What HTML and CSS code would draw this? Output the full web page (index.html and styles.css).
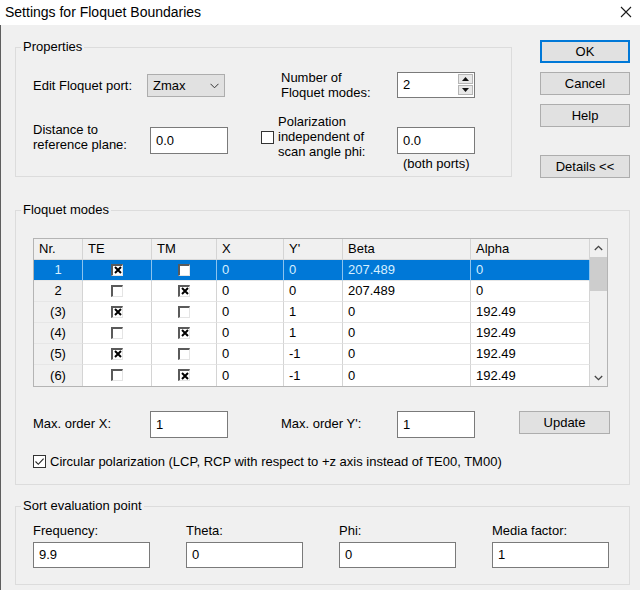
FILE: index.html
```html
<!doctype html>
<html lang="en">
<head>
	<meta charset="UTF-8">
	<title>Settings for Floquet Boundaries</title>
	<link rel="stylesheet" href="styles.css">
</head>
<body>
	<div class="titlebar">
		<span class="title">Settings for Floquet Boundaries</span>
		<svg class="close" width="12" height="12" viewBox="0 0 12 12"><path d="M1 1L11 11M11 1L1 11" stroke="#1a1a1a" stroke-width="1.1" fill="none"/></svg>
	</div>
	<div class="dialog">
		<div class="top">
			<fieldset class="group props">
				<legend>Properties</legend>
				<div class="gbody">
					<div class="prow prow1">
						<span class="lbl w114">Edit Floquet port:</span>
						<div class="select">Zmax<svg class="chev" width="9" height="6" viewBox="0 0 9 6"><path d="M0.5 0.8L4.5 4.8L8.5 0.8" stroke="#333" fill="none"/></svg></div>
						<span class="lbl modes">Number of<br>Floquet modes:</span>
						<div class="edit spin">2
							<div class="spin-btns">
								<span class="sb"><svg width="7" height="4" viewBox="0 0 7 4"><path d="M0 4L3.5 0L7 4Z" fill="#111"/></svg></span>
								<span class="sb"><svg width="7" height="4" viewBox="0 0 7 4"><path d="M0 0L3.5 4L7 0Z" fill="#111"/></svg></span>
							</div>
						</div>
					</div>
					<div class="prow prow2">
						<span class="lbl dist">Distance to<br>reference plane:</span>
						<div class="edit e78 dist-in">0.0</div>
						<span class="chk pol-chk"></span>
						<span class="lbl pol">Polarization<br>independent of<br>scan angle phi:</span>
						<div class="stack">
							<div class="edit e78">0.0</div>
							<div class="caption">(both ports)</div>
						</div>
					</div>
				</div>
			</fieldset>
			<div class="buttons">
				<div class="btn default">OK</div>
				<div class="btn">Cancel</div>
				<div class="btn">Help</div>
				<div class="btn details">Details &lt;&lt;</div>
			</div>
		</div>

		<fieldset class="group modesbox">
			<legend>Floquet modes</legend>
			<div class="gbody">
				<div class="grid">
					<table>
						<colgroup>
							<col style="width:49px"><col style="width:69px"><col style="width:65px"><col style="width:67px"><col style="width:59px"><col style="width:128px"><col style="width:119px">
						</colgroup>
						<tr class="head"><td>Nr.</td><td>TE</td><td>TM</td><td>X</td><td>Y'</td><td>Beta</td><td>Alpha</td></tr>
						<tr class="sel"><td class="nr">1</td><td class="c"><span class="tcb"><svg width="8" height="8" viewBox="0 0 8 8"><path d="M1 1L7 7M7 1L1 7" stroke="#000" stroke-width="2"/></svg></span></td><td class="c"><span class="tcb"></span></td><td>0</td><td>0</td><td>207.489</td><td>0</td></tr>
						<tr><td class="nr">2</td><td class="c"><span class="tcb"></span></td><td class="c"><span class="tcb"><svg width="8" height="8" viewBox="0 0 8 8"><path d="M1 1L7 7M7 1L1 7" stroke="#000" stroke-width="2"/></svg></span></td><td>0</td><td>0</td><td>207.489</td><td>0</td></tr>
						<tr><td class="nr">(3)</td><td class="c"><span class="tcb"><svg width="8" height="8" viewBox="0 0 8 8"><path d="M1 1L7 7M7 1L1 7" stroke="#000" stroke-width="2"/></svg></span></td><td class="c"><span class="tcb"></span></td><td>0</td><td>1</td><td>0</td><td>192.49</td></tr>
						<tr><td class="nr">(4)</td><td class="c"><span class="tcb"></span></td><td class="c"><span class="tcb"><svg width="8" height="8" viewBox="0 0 8 8"><path d="M1 1L7 7M7 1L1 7" stroke="#000" stroke-width="2"/></svg></span></td><td>0</td><td>1</td><td>0</td><td>192.49</td></tr>
						<tr><td class="nr">(5)</td><td class="c"><span class="tcb"><svg width="8" height="8" viewBox="0 0 8 8"><path d="M1 1L7 7M7 1L1 7" stroke="#000" stroke-width="2"/></svg></span></td><td class="c"><span class="tcb"></span></td><td>0</td><td>-1</td><td>0</td><td>192.49</td></tr>
						<tr class="last"><td class="nr">(6)</td><td class="c"><span class="tcb"></span></td><td class="c"><span class="tcb"><svg width="8" height="8" viewBox="0 0 8 8"><path d="M1 1L7 7M7 1L1 7" stroke="#000" stroke-width="2"/></svg></span></td><td>0</td><td>-1</td><td>0</td><td>192.49</td></tr>
					</table>
					<div class="vscroll">
						<div class="arrow"><svg width="9" height="6" viewBox="0 0 9 6"><path d="M0.8 5L4.5 1.3L8.2 5" stroke="#444" stroke-width="1.3" fill="none"/></svg></div>
						<div class="thumb"></div>
						<div class="track"></div>
						<div class="arrow"><svg width="9" height="6" viewBox="0 0 9 6"><path d="M0.8 1L4.5 4.7L8.2 1" stroke="#444" stroke-width="1.3" fill="none"/></svg></div>
					</div>
				</div>
				<div class="orow">
					<span class="lbl olbl">Max. order X:</span>
					<div class="edit e78">1</div>
					<span class="lbl olbl2">Max. order Y':</span>
					<div class="edit e78">1</div>
					<div class="btn update">Update</div>
				</div>
				<div class="crow">
					<span class="chk"><svg width="11" height="11" viewBox="0 0 11 11"><path d="M1.5 5.5L4.3 8.3L9.6 2.6" stroke="#222" stroke-width="1.1" fill="none"/></svg></span>
					<span>Circular polarization (LCP, RCP with respect to +z axis instead of TE00, TM00)</span>
				</div>
			</div>
		</fieldset>

		<fieldset class="group sortbox">
			<legend>Sort evaluation point</legend>
			<div class="gbody sgrid">
				<div class="field"><div class="flbl">Frequency:</div><div class="edit">9.9</div></div>
				<div class="field"><div class="flbl">Theta:</div><div class="edit">0</div></div>
				<div class="field"><div class="flbl">Phi:</div><div class="edit">0</div></div>
				<div class="field"><div class="flbl">Media factor:</div><div class="edit">1</div></div>
			</div>
		</fieldset>
	</div>
</body>
</html>
```

FILE: styles.css
```css
body,html{margin: 0;padding: 0;}
body{width: 640px;height: 590px;overflow: hidden;background: #f0f0f0;color: #000;font: 13px/15px "Liberation Sans", Arial, sans-serif;}

.titlebar{height: 25px;background: #fff;display: flex;align-items: center;justify-content: space-between;padding: 0 8px 0 5px;}
.title{font-size: 14px;}
.close{margin-top: -2px;}

.dialog{height: 565px;box-sizing: border-box;border-left: 1px solid #5e5e5e;padding-left: 14px;}
.top{display: flex;align-items: flex-start;padding-top: 14px;}

.group{margin: 0;padding: 0;border: 1px solid #dcdcdc;min-width: 0;box-sizing: border-box;}
.group legend{margin-left: 5px;padding: 0 2px;line-height: 16px;}
.gbody{padding-left: 17px;}

.props{width: 497px;}
.props .gbody{padding-top: 15px;padding-bottom: 5px;}
.prow{display: flex;}
.prow1{align-items: center;height: 30px;}
.prow2{align-items: flex-start;margin-top: 14px;}

.lbl{display: block;}
.w114{width: 114px;}
.modes{width: 116px;margin-left: 56px;}
.dist{width: 117px;margin-top: 8px;}
.dist-in{margin-top: 13px;}
.pol{width: 119px;margin-left: 4px;}
.pol-chk{margin-left: 33px;margin-top: 17px;}
.stack{margin-top: 13px;}
.caption{margin-top: 2px;padding-left: 6px;}

.edit{height: 26px;box-sizing: border-box;border: 1px solid #7a7a7a;background: #fff;padding-left: 5px;line-height: 24px;}
.e78{width: 78px;height: 27px;line-height: 25px;}
.spin{width: 78px;position: relative;}
.spin-btns{position: absolute;right: 1px;top: 1px;display: flex;flex-direction: column;gap: 1px;}
.sb{width: 15px;height: 10px;box-sizing: border-box;border: 1px solid #b5b5b5;background: #e8e8e8;display: flex;align-items: center;justify-content: center;}

.select{width: 78px;height: 23px;box-sizing: border-box;border: 1px solid #adadad;background: #e1e1e1;display: flex;align-items: center;justify-content: space-between;padding: 0 5px 0 5px;}
.chev{margin-top: 1px;}

.buttons{width: 90px;margin-left: 28px;margin-top: 1px;display: flex;flex-direction: column;}
.btn{height: 23px;box-sizing: border-box;border: 1px solid #adadad;background: #e1e1e1;text-align: center;line-height: 21px;}
.btn + .btn{margin-top: 9px;}
.btn.default{border: 2px solid #0078d7;line-height: 19px;}
.btn.details{margin-top: 28px;}

.chk{display: block;width: 13px;height: 13px;box-sizing: border-box;border: 1px solid #333;background: #fff;}
.chk svg{display: block;margin: 0;}

.modesbox{width: 615px;margin-top: 24px;}
.modesbox .gbody{padding-top: 20px;padding-bottom: 15px;}

.grid{width: 575px;height: 149px;box-sizing: border-box;border: 1px solid #b4b4b4;display: flex;background: #fff;}
.grid table{width: 556px;border-spacing: 0;table-layout: fixed;}
.grid td{height: 21px;box-sizing: border-box;padding: 0 0 0 5px;border-right: 1px solid #d4d4d4;border-bottom: 1px solid #e6e6e6;line-height: 20px;white-space: nowrap;}
.grid tr.last td{border-bottom: 0;}
.grid tr.head td{background: #f0f0f0;border-bottom-color: #dadada;}
.grid td.nr{background: #f0f0f0;text-align: center;padding: 0;}
.grid td.c{text-align: center;padding: 0;}
.grid tr.sel td{background: #0078d7;color: #d6efff;border-right-color: #8cc3ee;}

.tcb{display: inline-flex;align-items: center;justify-content: center;vertical-align: middle;width: 12px;height: 12px;box-sizing: border-box;border-left: 2px solid #5a5a5a;border-top: 2px solid #5a5a5a;border-right: 1px solid #e4e4e4;border-bottom: 1px solid #e4e4e4;background: #fff;margin-top: -2px;}
.tcb svg{display: block;}

.vscroll{width: 17px;background: #f0f0f0;display: flex;flex-direction: column;}
.vscroll .arrow{height: 17px;display: flex;align-items: center;justify-content: center;}
.vscroll .thumb{height: 34px;margin-top: 1px;background: #cdcdcd;}
.vscroll .track{flex: 1;}

.orow{display: flex;align-items: flex-start;margin-top: 24px;}
.olbl{width: 117px;margin-top: 5px;}
.olbl2{width: 116px;margin-left: 53px;margin-top: 5px;}
.btn.update{width: 91px;margin-left: 44px;margin-top: 0;}

.crow{display: flex;align-items: center;gap: 4px;margin-top: 16px;height: 15px;}

.sortbox{width: 615px;margin-top: 13px;}
.sgrid{display: grid;grid-template-columns: repeat(4, 117px);column-gap: 36px;padding-top: 9px;padding-bottom: 16px;}
.flbl{margin-bottom: 4px;}
```
